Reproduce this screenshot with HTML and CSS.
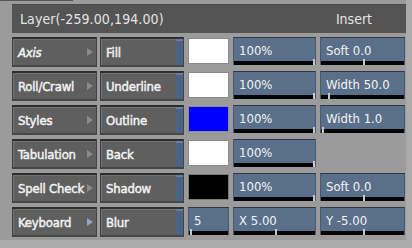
FILE: index.html
```html
<!DOCTYPE html>
<html>
<head>
<meta charset="utf-8">
<link rel="stylesheet" href="styles.css">
</head>
<body>
<div class="panel">
  <div class="tabline"></div>
  <div class="titlebar">
    <span class="title">Layer(-259.00,194.00)</span>
    <span class="mode">Insert</span>
  </div>
  <div class="grid">
    <div class="menu sel"><span class="lbl">Axis</span><span class="arrow"></span></div>
    <div class="attr"><span class="lbl">Fill</span></div>
    <div class="swatch white"></div>
    <div class="field"><span class="val">100%</span><i class="tick" style="left:calc(100% - 2px)"></i></div>
    <div class="field"><span class="val">Soft 0.0</span><i class="tick" style="left:50%"></i></div>

    <div class="menu"><span class="lbl">Roll/Crawl</span><span class="arrow"></span></div>
    <div class="attr"><span class="lbl">Underline</span></div>
    <div class="swatch white"></div>
    <div class="field"><span class="val">100%</span><i class="tick" style="left:calc(100% - 2px)"></i></div>
    <div class="field"><span class="val">Width 50.0</span><i class="tick" style="left:9%"></i></div>

    <div class="menu"><span class="lbl">Styles</span><span class="arrow"></span></div>
    <div class="attr"><span class="lbl">Outline</span></div>
    <div class="swatch blue"></div>
    <div class="field"><span class="val">100%</span><i class="tick" style="left:calc(100% - 2px)"></i></div>
    <div class="field"><span class="val">Width 1.0</span><i class="tick" style="left:1px"></i></div>

    <div class="menu"><span class="lbl">Tabulation</span><span class="arrow"></span></div>
    <div class="attr"><span class="lbl">Back</span></div>
    <div class="swatch white"></div>
    <div class="field"><span class="val">100%</span><i class="tick" style="left:calc(100% - 2px)"></i></div>
    <div class="empty"></div>

    <div class="menu"><span class="lbl">Spell Check</span><span class="arrow"></span></div>
    <div class="attr"><span class="lbl">Shadow</span></div>
    <div class="swatch black"></div>
    <div class="field"><span class="val">100%</span><i class="tick" style="left:calc(100% - 2px)"></i></div>
    <div class="field"><span class="val">Soft 0.0</span><i class="tick" style="left:50%"></i></div>

    <div class="menu"><span class="lbl">Keyboard</span><span class="arrow lit"></span></div>
    <div class="attr"><span class="lbl">Blur</span></div>
    <div class="field small"><span class="val">5</span><i class="tick" style="left:1px"></i></div>
    <div class="field"><span class="val">X 5.00</span><i class="tick" style="left:50%"></i></div>
    <div class="field"><span class="val">Y -5.00</span><i class="tick" style="left:50%"></i></div>
  </div>
</div>
</body>
</html>
```
FILE: styles.css
```css
html, body {
  margin: 0;
  padding: 0;
  background: #ababab;
  width: 412px;
  height: 248px;
  overflow: hidden;
  font-family: "DejaVu Sans Condensed", "DejaVu Sans", sans-serif;
}
.panel {
  position: relative;
  width: 394px;
  height: 236px;
  padding: 4px 0 0 12px;
  background: #9b9b9b;
}
.tabline {
  position: absolute;
  left: 0;
  top: 0;
  width: 73px;
  height: 1px;
  background: #555;
}
.titlebar {
  height: 29px;
  background: #545454;
  display: flex;
  align-items: center;
  justify-content: space-between;
  padding: 0 34px 0 8px;
  color: #e4e4e4;
  font-size: 14px;
  border-top: 1px solid #4a4a4a;
  box-sizing: border-box;
}
.title { letter-spacing: 0.1px; }
.grid {
  margin-top: 4px;
  width: 392px;
  display: grid;
  grid-template-columns: 84px 84px 41px 83px 85px;
  grid-auto-rows: 30px;
  column-gap: 4px;
  row-gap: 4px;
  font-size: 13px;
}
.menu, .attr {
  position: relative;
  box-sizing: border-box;
  background: #5f5f5f;
  border-top: 2px solid #2e2e2e;
  border-left: 1px solid #3e3e3e;
  border-right: 1px solid #444;
  border-bottom: 2px solid #464646;
  box-shadow: inset 1px 1px 0 #727272;
  color: #f2f2f2;
  font-weight: normal;
  -webkit-text-stroke: 0.45px #f2f2f2;
  letter-spacing: -0.2px;
  display: flex;
  align-items: center;
  padding-left: 5px;
  white-space: nowrap;
}
.menu { margin-right: -1px; }
.sel .lbl { font-style: italic; }
.arrow {
  position: absolute;
  right: 3px;
  top: 9px;
  width: 0;
  height: 0;
  border-top: 4.5px solid transparent;
  border-bottom: 4.5px solid transparent;
  border-left: 6px solid #8a8a8a;
}
.arrow.lit { border-left-color: #8fa6c8; }
.attr {
  padding-right: 8px;
}
.attr::after {
  content: "";
  position: absolute;
  right: 0;
  top: 0;
  bottom: 0;
  width: 7px;
  background: #4d6384;
  box-shadow: inset 0 2px 0 #6b80a0;
}
.swatch {
  box-sizing: border-box;
  margin: 1px 0 3px 0;
  border: 1px solid #8c8c8c;
}
.white { background: #ffffff; }
.blue { background: #0000ff; }
.black { background: #000000; border-color: #7a7a7a; }
.field {
  position: relative;
  box-sizing: border-box;
  margin-bottom: 2px;
  background: #5a6f89;
  border-top: 1px solid #2f3640;
  border-left: 1px solid #4a5a70;
  border-right: 1px solid #4a5a70;
  color: #f4f4f4;
  padding: 5px 0 0 5px;
  line-height: 16px;
}
.field::after {
  content: "";
  position: absolute;
  left: 0;
  right: 0;
  bottom: 0;
  height: 4px;
  background: #050505;
}
.tick {
  position: absolute;
  bottom: 0;
  width: 2px;
  height: 6px;
  background: #c8c8c8;
  z-index: 1;
}
.small { margin-left: 0; }
.empty { }
```
